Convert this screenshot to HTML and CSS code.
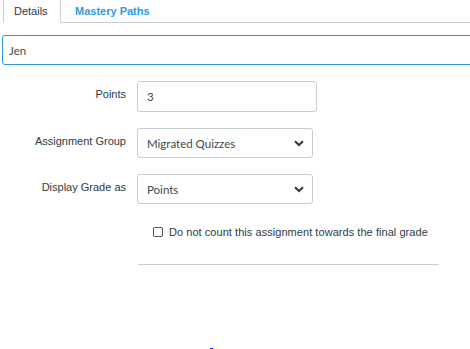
FILE: index.html
```html
<!DOCTYPE html>
<html lang="en">
<head>
  <meta charset="UTF-8">
  <title>Edit Quiz</title>
  <link rel="stylesheet" href="styles.css">
</head>
<body>
  <!-- Tabs -->
  <div class="tabs">
    <div class="tab active">Details</div>
    <div class="tab link">Mastery Paths</div>
    <div class="tab-fill"></div>
  </div>

  <!-- Title input -->
  <div class="title-row">
    <input type="text" class="title-input" value="Jen">
  </div>

  <!-- Form rows -->
  <div class="form-row">
    <label class="form-label">Points</label>
    <input type="text" class="text-input" value="3">
  </div>
  <div class="form-row">
    <label class="form-label">Assignment Group</label>
    <div class="select-box">
      <span>Migrated Quizzes</span>
      <svg class="chevron" width="10" height="7" viewBox="0 0 10 7"><path d="M1 1.2 L5 5 L9 1.2" fill="none" stroke="#2d3b45" stroke-width="2"/></svg>
    </div>
  </div>
  <div class="form-row">
    <label class="form-label">Display Grade as</label>
    <div class="select-box">
      <span>Points</span>
      <svg class="chevron" width="10" height="7" viewBox="0 0 10 7"><path d="M1 1.2 L5 5 L9 1.2" fill="none" stroke="#2d3b45" stroke-width="2"/></svg>
    </div>
  </div>

  <div class="check-row">
    <label><span class="box"></span> Do not count this assignment towards the final grade</label>
  </div>

  <hr class="divider">
  <div class="dot"></div>
</body>
</html>
```

FILE: styles.css
```css
body {
  margin: 0;
  font-family: "Liberation Sans", Arial, sans-serif;
  color: #2d3b45;
  background: #fff;
  overflow: hidden;
}
/* tab strip */
.tabs {
  display: flex;
  height: 23px;
  padding-left: 3px;
}
.tab {
  font-size: 11px;
  padding: 4px 10px 0;
  line-height: 15px;
  border-bottom: 1px solid #c7cdd1;
}
.tab.active {
  width: 36px;
  border: 1px solid #c7cdd1;
  border-top: none;
  border-bottom-color: #fff;
  padding-left: 10px;
}
.tab.link {
  color: #2d9be0;
  font-weight: bold;
  padding-left: 14px;
}
.tab-fill {
  flex: 1;
  border-bottom: 1px solid #c7cdd1;
}
.title-row {
  padding: 12px 0 0 2px;
}
.title-input {
  box-sizing: border-box;
  width: 480px;
  height: 30px;
  border: 1px solid #2b95de;
  border-radius: 3px;
  padding: 0 0 0 6px;
  font-family: Lato, sans-serif;
  font-size: 11.5px;
  color: #3d4850;
  outline: none;
}
.form-row {
  display: flex;
  align-items: center;
  margin-top: 16px;
}
.form-label {
  width: 126px;
  text-align: right;
  font-size: 11px;
  padding-right: 11px;
  margin-top: -5px;
}
.text-input {
  box-sizing: border-box;
  width: 180px;
  height: 31px;
  border: 1px solid #c7cdd1;
  border-radius: 3px;
  padding: 0 0 0 9px;
  font-family: Lato, sans-serif;
  font-size: 11.5px;
  color: #3d4850;
}
.select-box {
  box-sizing: border-box;
  width: 176px;
  height: 30px;
  border: 1px solid #c7cdd1;
  border-radius: 3px;
  padding: 0 8px 0 9px;
  display: flex;
  align-items: center;
  justify-content: space-between;
  font-family: Lato, sans-serif;
  font-size: 11.5px;
  color: #3d4850;
}
.check-row {
  padding: 22px 0 0 153px;
  font-size: 11px;
  letter-spacing: 0.05px;
}
.check-row label {
  display: flex;
  align-items: center;
}
.box {
  width: 8px;
  height: 8px;
  border: 1px solid #555;
  border-radius: 2px;
  margin-right: 6px;
}
.divider {
  margin: 26px 0 0 138px;
  width: 301px;
  border: none;
  border-top: 1px solid #c7cdd1;
}
.dot {
  width: 3px;
  height: 1px;
  background: #2020ff;
  margin: 83px 0 0 210px;
}
```
